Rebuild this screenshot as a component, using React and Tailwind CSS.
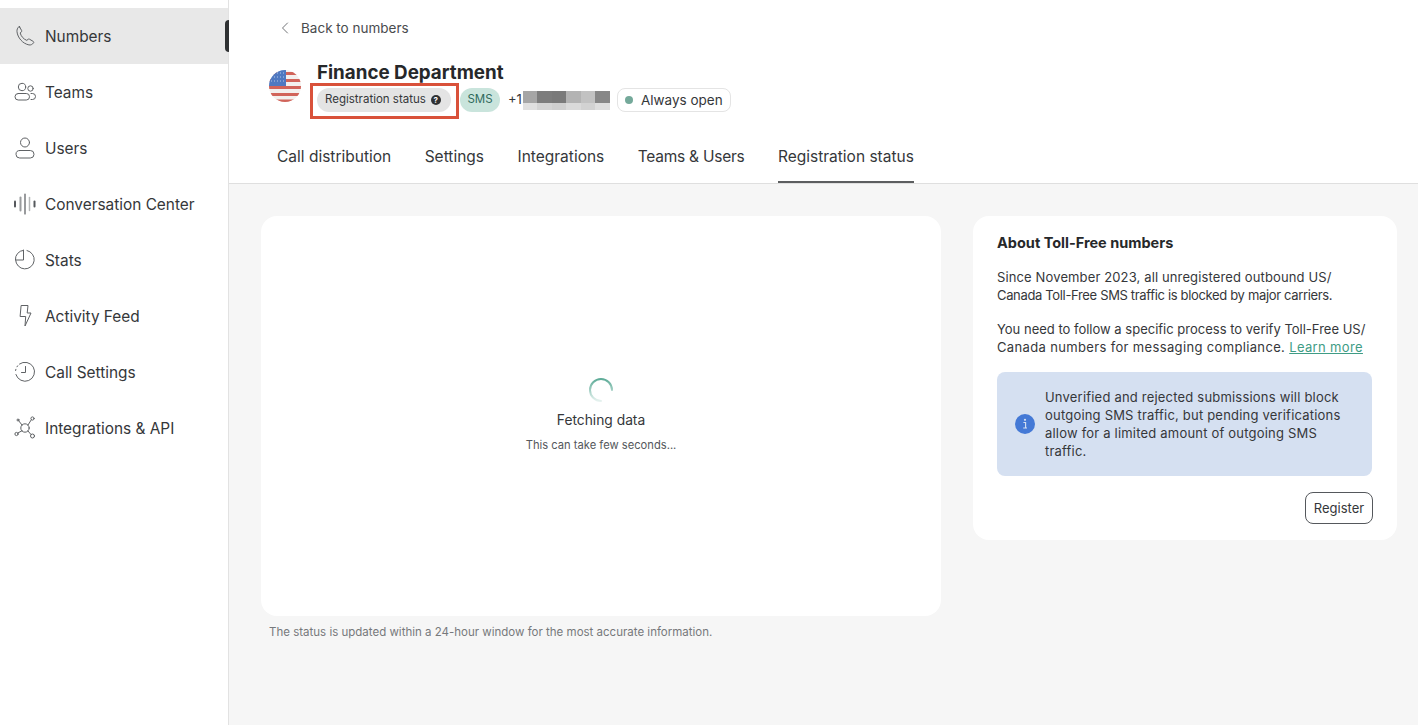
import { ChevronLeft } from 'lucide-react';

const icon = { fill: 'none', stroke: '#5f6265', strokeWidth: 1, strokeLinecap: 'round', strokeLinejoin: 'round' };

function PhoneIcon() {
  return (
    <svg width="22" height="22" viewBox="0 0 22 22" {...icon}>
      <path d="M5.200 1.600 7.600 5.400c.3.500.2 1-.2 1.400L6.200 8c.8 3.200 3.400 6.200 6.600 7.400l1.300-1.100c.4-.3.900-.4 1.400-.1l3.700 2.200c.6.400.7 1 .3 1.500-1.100 1.500-2.700 2.400-4.600 2-6.300-1.300-11.300-7.300-11.900-13.200-.2-2.100.5-3.800 1.900-4.900.3-.2.700-.2 1 .1z" />
    </svg>
  );
}

function TeamsIcon() {
  return (
    <svg width="23" height="20" viewBox="0 0 23 20" {...icon}>
      <circle cx="8" cy="5" r="3.700" />
      <circle cx="16.500" cy="6.500" r="2.700" />
      <rect x="1" y="11.500" width="14.500" height="6.500" rx="3.200" />
      <path d="M17 11.500h1.500a3 3 0 0 1 0 6H17" />
    </svg>
  );
}

function UserIcon() {
  return (
    <svg width="22" height="22" viewBox="0 0 22 22" {...icon}>
      <circle cx="11" cy="5.500" r="4.500" />
      <rect x="2" y="13.500" width="18" height="7.500" rx="3.700" />
    </svg>
  );
}

function WaveIcon() {
  return (
    <svg width="24" height="22" viewBox="0 0 24 22" fill="none" strokeLinecap="round">
      <path d="M2 8.500v5" stroke="#55585c" strokeWidth="2" />
      <path d="M7.500 4.500v13" stroke="#9a9c9e" strokeWidth="2" />
      <path d="M12 1v20" stroke="#55585c" strokeWidth="1.200" />
      <path d="M16.500 4.500v13" stroke="#b5b7b8" strokeWidth="1.500" />
      <path d="M21.500 8.500v5" stroke="#55585c" strokeWidth="2" />
    </svg>
  );
}

function StatsIcon() {
  return (
    <svg width="22" height="22" viewBox="0 0 22 22" {...icon}>
      <path d="M13 1.500a9.300 9.300 0 1 1-11.400 9.500" />
      <path d="M9.500 1.300v9.700H1.500a8.800 8.800 0 0 1 8-9.700z" />
    </svg>
  );
}

function BoltIcon() {
  return (
    <svg width="22" height="24" viewBox="0 0 22 24" {...icon}>
      <path d="M7.500 1.500h6.500l-.8 7.500h3.800l-6 13 .7-9.500H6.500z" />
    </svg>
  );
}

function HistoryIcon() {
  return (
    <svg width="22" height="22" viewBox="0 0 22 22" {...icon}>
      <path d="M5.500 3a9.500 9.500 0 1 1-3.600 10.500" />
      <path d="M1.600 9.500l.3-1.200M3 5.800l.7-1" />
      <path d="M11.500 5.500v6H7.500" />
    </svg>
  );
}

function NetworkIcon() {
  return (
    <svg width="22" height="24" viewBox="0 0 22 24" {...icon}>
      <circle cx="11" cy="12" r="4.200" />
      <circle cx="4" cy="4" r="1" />
      <circle cx="18.500" cy="2.500" r="1.600" />
      <circle cx="2.500" cy="18" r="1.600" />
      <circle cx="18.500" cy="20" r="2" />
      <path d="M4.700 4.800 8 9M17.300 3.800 14 9M3.800 17 8 14.800M17 18.500 14 15" />
    </svg>
  );
}

function InfoCircle() {
  return (
    <svg width="20" height="20" viewBox="0 0 20 20" className="shrink-0">
      <circle cx="10" cy="10" r="10" fill="#4479d6" />
      <circle cx="10" cy="5.800" r="1.100" fill="#d5e0f1" />
      <path d="M8.400 8.500H10.600V14H12M8.200 14H10.600" fill="none" stroke="#d5e0f1" strokeWidth="1.100" />
    </svg>
  );
}

function Flag() {
  return (
    <svg width="32" height="32" viewBox="0 0 32 32" className="shrink-0">
      <defs>
        <clipPath id="flag-clip">
          <circle cx="16" cy="16" r="16" />
        </clipPath>
      </defs>
      <g clipPath="url(#flag-clip)">
        <rect width="32" height="32" fill="#f3f0ee" />
        <path d="M0 3.500h32M0 10.500h32M0 17.500h32M0 24.500h32M0 31h32" stroke="#d1645a" strokeWidth="2.800" />
        <rect width="17" height="16" fill="#4f79c1" />
        <path d="M2 3h14M2 7h14M2 11h14" stroke="#b8c9e6" strokeWidth="1" strokeDasharray="1 2" />
      </g>
    </svg>
  );
}

const NAV = [
  { label: 'Numbers', Icon: PhoneIcon, active: true },
  { label: 'Teams', Icon: TeamsIcon },
  { label: 'Users', Icon: UserIcon },
  { label: 'Conversation Center', Icon: WaveIcon },
  { label: 'Stats', Icon: StatsIcon },
  { label: 'Activity Feed', Icon: BoltIcon },
  { label: 'Call Settings', Icon: HistoryIcon },
  { label: 'Integrations & API', Icon: NetworkIcon },
];

const TABS = ['Call distribution', 'Settings', 'Integrations', 'Teams & Users', 'Registration status'];

// blurred out phone number
const BLUR = ['#a6a6a6', '#7d7d7d', '#7a7a7a', '#b3b3b3', '#c2c2c2', '#878787'];
const BLUR_LOW = ['#e0e0e0', '#d4d4d4', '#cfcfcf', '#dadada', '#d2d2d2', '#dedede'];

export default function App() {
  return (
    <div className="flex h-[725px] w-[1418px] overflow-hidden bg-[#f6f6f6] font-['Inter',sans-serif] text-[#35373a]">
      <aside className="w-[229px] shrink-0 border-r border-[#e2e2e2] bg-white pt-2">
        {NAV.map(({ label, Icon, active }) => (
          <div key={label} className={`relative flex h-14 items-center ${active ? 'bg-[#e8e8e8]' : ''}`}>
            <span className="flex w-[45px] shrink-0 justify-center pl-[5px]">
              <Icon />
            </span>
            <span className="pt-[2px] text-[15.400px]">{label}</span>
            {active && <span className="absolute -right-px top-3 h-8 w-1 rounded-l bg-[#2f3133]" />}
          </div>
        ))}
      </aside>

      <main className="flex min-w-0 flex-1 flex-col">
        <header className="relative h-[184px] shrink-0 border-b border-[#dfdfdf] bg-white pl-10">
          <div className="flex h-14 items-center">
            <ChevronLeft size={20} strokeWidth={1} className="ml-[6px] text-[#55585c]" />
            <span className="ml-[6px] text-[13.500px] text-[#494b4e]">Back to numbers</span>
          </div>
          <div className="mt-[14px] flex">
            <Flag />
            <div className="-mt-[9px] ml-4">
              <h1 className="text-[18.800px] font-bold leading-6 text-[#26282a]">Finance Department</h1>
              <div className="mt-[3px] flex h-6 items-center">
                <span className="flex h-6 w-[134px] items-center gap-[5px] rounded-full bg-[#e4e4e4] pl-2 text-[11.500px]">
                  Registration status
                  <span className="flex h-[10px] w-[10px] items-center justify-center rounded-full bg-[#2f3133] text-[8px] font-bold leading-none text-white">?</span>
                </span>
                <span className="ml-[9px] flex h-6 w-10 items-center justify-center rounded-full bg-[#c9e4dc] text-[11.500px] text-[#2f6b5c]">SMS</span>
                <span className="ml-2 text-[13px]">+1</span>
                <span className="ml-px flex h-[19px] w-[87px] flex-col overflow-hidden">
                  <span className="flex h-3">
                    {BLUR.map((c, i) => <span key={i} className="flex-1" style={{ backgroundColor: c }} />)}
                  </span>
                  <span className="flex flex-1">
                    {BLUR_LOW.map((c, i) => <span key={i} className="flex-1" style={{ backgroundColor: c }} />)}
                  </span>
                </span>
                <span className="ml-[7px] flex h-6 w-[114px] items-center gap-2 rounded-lg border border-[#e4e4e4] pl-[7px] text-[13.500px]">
                  <span className="h-2 w-2 rounded-full bg-[#74a99a]" />
                  Always open
                </span>
              </div>
            </div>
          </div>
          <nav className="absolute bottom-0 left-12 flex gap-[33.500px]">
            {TABS.map((t, i) => (
              <span key={t} className={`flex h-[55px] items-center border-b-2 pt-1 text-[15.500px] ${i === 4 ? 'border-[#5c5e60]' : 'border-transparent'} ${i === 3 ? 'tracking-[-0.25px]' : ''}`}>
                {t}
              </span>
            ))}
          </nav>
        </header>

        <div className="flex items-start gap-8 pl-8 pt-8">
          <div>
            <section className="flex h-[400px] w-[680px] flex-col items-center justify-center rounded-2xl bg-white pb-px">
              <svg width="26" height="26" viewBox="0 0 26 26">
                <defs>
                  <linearGradient id="spin" x1="0" y1="0" x2="0" y2="1">
                    <stop offset="0" stopColor="#5dab97" />
                    <stop offset="1" stopColor="#e6f2ef" />
                  </linearGradient>
                </defs>
                <path d="M24 13A11 11 0 1 0 13 24" fill="none" stroke="url(#spin)" strokeWidth="2" strokeLinecap="round" />
              </svg>
              <p className="mt-[7px] text-[13.800px]">Fetching data</p>
              <p className="mt-[6px] text-[11.200px] text-[#55585c]">This can take few seconds...</p>
            </section>
            <p className="ml-2 mt-[8px] text-[11.500px] text-[#77797c]">
              The status is updated within a 24-hour window for the most accurate information.
            </p>
          </div>

          <section className="h-[324px] w-[424px] rounded-2xl bg-white px-6 pt-[17px]">
            <h2 className="text-[14.500px] font-bold leading-5 text-[#26282a]">About Toll-Free numbers</h2>
            <p className="mt-[15px] text-[13px] leading-[18px]">
              <span className="tracking-[0.13px]">Since November 2023, all unregistered outbound US/</span><br />
              <span className="tracking-[-0.34px]">Canada Toll-Free SMS traffic is blocked by major carriers.</span>
            </p>
            <p className="mt-[16px] text-[13px] leading-[18px]">
              You need to follow a specific process to verify Toll-Free US/<br />
              <span className="tracking-[0.35px]">Canada numbers for messaging compliance. <span className="text-[#3f9c85] underline">Learn more</span></span>
            </p>
            <div className="mt-4 flex h-[104px] w-[375px] items-center gap-[10px] rounded-lg bg-[#d5e0f1] pl-[18px] text-[13px] leading-[18px] tracking-[0.2px]">
              <InfoCircle />
              <p>
                Unverified and rejected submissions will block<br />
                outgoing SMS traffic, but pending verifications<br />
                allow for a limited amount of outgoing SMS<br />
                traffic.
              </p>
            </div>
            <div className="mt-4 flex w-[376px] justify-end">
              <button className="h-8 w-[68px] rounded-lg border border-[#55585c] pt-px text-[13px]">Register</button>
            </div>
          </section>
        </div>
      </main>

      {/* annotation drawn over the screenshot */}
      <div className="absolute left-[310px] top-[83px] h-[36px] w-[149px] border-[3px] border-[#d9513a]" />
    </div>
  );
}
